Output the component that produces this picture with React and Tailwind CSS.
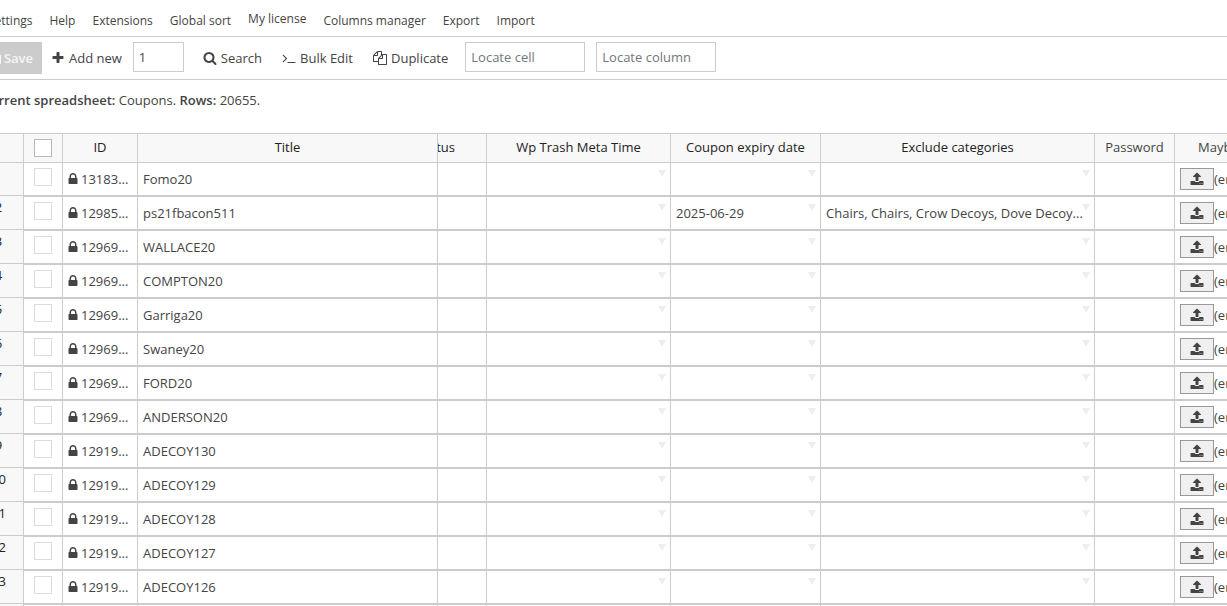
import React from 'react';

const ICONS = {
  save: 'M512 1536h768v-384h-768v384zm896 0h128v-896q0-14-10-38.5t-20-34.5l-281-281q-10-10-34-20t-39-10v416q0 40-28 68t-68 28h-576q-40 0-68-28t-28-68v-416h-128v1280h128v-416q0-40 28-68t68-28h832q40 0 68 28t28 68v416zm-384-928v-320q0-13-9.5-22.5t-22.5-9.5h-192q-13 0-22.5 9.5t-9.5 22.5v320q0 13 9.5 22.5t22.5 9.5h192q13 0 22.5-9.5t9.5-22.5zm640 32v928q0 40-28 68t-68 28h-1344q-40 0-68-28t-28-68v-1344q0-40 28-68t68-28h928q40 0 88 20t76 48l280 280q28 28 48 76t20 88z',
  plus: 'M1600 736v192q0 40-28 68t-68 28h-416v416q0 40-28 68t-68 28h-192q-40 0-68-28t-28-68v-416h-416q-40 0-68-28t-28-68v-192q0-40 28-68t68-28h416v-416q0-40 28-68t68-28h192q40 0 68 28t28 68v416h416q40 0 68 28t28 68z',
  search: 'M1216 832q0-185-131.5-316.5t-316.5-131.5-316.5 131.5-131.5 316.5 131.5 316.5 316.5 131.5 316.5-131.5 131.5-316.5zm512 832q0 52-38 90t-90 38q-54 0-90-38l-343-342q-179 124-399 124-143 0-273.5-55.5t-225-150-150-225-55.5-273.5 55.5-273.5 150-225 225-150 273.5-55.5 273.5 55.5 225 150 150 225 55.5 273.5q0 220-124 399l343 343q37 37 37 90z',
  terminal: 'M649 983l-466 466q-10 10-23 10t-23-10l-50-50q-10-10-10-23t10-23l393-393-393-393q-10-10-10-23t10-23l50-50q10-10 23-10t23 10l466 466q10 10 10 23t-10 23zm1079 457v64q0 14-9 23t-23 9h-960q-14 0-23-9t-9-23v-64q0-14 9-23t23-9h960q14 0 23 9t9 23z',
  copy: 'M1696 384q40 0 68 28t28 68v1216q0 40-28 68t-68 28h-960q-40 0-68-28t-28-68v-288h-544q-40 0-68-28t-28-68v-672q0-40 20-88t48-76l408-408q28-28 76-48t88-20h416q40 0 68 28t28 68v328q68-40 128-40h416zm-544 213l-299 299h299v-299zm-640-384l-299 299h299v-299zm196 647l316-316v-416h-384v416q0 40-28 68t-68 28h-416v640h512v-256q0-40 20-88t48-76zm956 804v-1152h-384v416q0 40-28 68t-68 28h-416v640h896z',
  lock: 'M640 768h512v-192q0-106-75-181t-181-75-181 75-75 181v192zm832 96v576q0 40-28 68t-68 28h-960q-40 0-68-28t-28-68v-576q0-40 28-68t68-28h32v-192q0-184 132-316t316-132 316 132 132 316v192h32q40 0 68 28t28 68z',
  upload: 'M1344 1472q0-26-19-45t-45-19-45 19-19 45 19 45 45 19 45-19 19-45zm256 0q0-26-19-45t-45-19-45 19-19 45 19 45 45 19 45-19 19-45zm128-224v320q0 40-28 68t-68 28h-1472q-40 0-68-28t-28-68v-320q0-40 28-68t68-28h427q21 56 70.5 92t110.5 36h256q61 0 110.5-36t70.5-92h427q40 0 68 28t28 68zm-325-648q-17 40-59 40h-256v448q0 26-19 45t-45 19h-256q-26 0-45-19t-19-45v-448h-256q-42 0-59-40-17-39 14-69l448-448q18-19 45-19t45 19l448 448q31 30 14 69z',
};

const MENU = ['Settings', 'Help', 'Extensions', 'Global sort', 'My license', 'Columns manager', 'Export', 'Import'];

const ROWS = [
  { id: '13183...', title: 'Fomo20' },
  { id: '12985...', title: 'ps21fbacon511', expiry: '2025-06-29', exclude: 'Chairs, Chairs, Crow Decoys, Dove Decoy...' },
  { id: '12969...', title: 'WALLACE20' },
  { id: '12969...', title: 'COMPTON20' },
  { id: '12969...', title: 'Garriga20' },
  { id: '12969...', title: 'Swaney20' },
  { id: '12969...', title: 'FORD20' },
  { id: '12969...', title: 'ANDERSON20' },
  { id: '12919...', title: 'ADECOY130' },
  { id: '12919...', title: 'ADECOY129' },
  { id: '12919...', title: 'ADECOY128' },
  { id: '12919...', title: 'ADECOY127' },
  { id: '12919...', title: 'ADECOY126' },
];

const COLS = ['w-[50px]', 'w-[39px]', 'w-[75px]', 'w-[300px]', 'w-[49px]', 'w-[184px]', 'w-[150px]', 'w-[274px]', 'w-[80px]', 'w-[140px]'];

function Icon({ name, className = 'size-3.5' }) {
  return (
    <svg viewBox="0 0 1792 1792" fill="currentColor" className={`shrink-0 ${className}`} aria-hidden="true">
      <path d={ICONS[name]} />
    </svg>
  );
}

function ToolButton({ icon, children }) {
  return (
    <button type="button" className="flex items-center gap-1 whitespace-nowrap">
      <Icon name={icon} />
      {children}
    </button>
  );
}

function Head({ children, className = '' }) {
  return (
    <th className={`h-[30px] overflow-hidden whitespace-nowrap border-y border-r border-[#ccc] bg-[#f8f8f8] p-0 text-center font-normal text-[#222] ${className}`}>
      {children}
    </th>
  );
}

function Cell({ children, first, dropdown }) {
  return (
    <td className={`relative overflow-hidden border-b border-r border-[#ccc] px-[5px] py-0 align-top ${first ? '' : 'border-t'}`}>
      <div className="truncate leading-8">{children}</div>
      {dropdown && (
        <svg viewBox="0 0 8 7" className="absolute right-1 top-[7px] h-[7px] w-2 text-[#eee]" aria-hidden="true">
          <path d="M0 0h8L4 7z" fill="currentColor" />
        </svg>
      )}
    </td>
  );
}

function Row({ row, index }) {
  const first = index === 0;
  return (
    <tr className={first ? 'h-[33px]' : 'h-[34px]'}>
      <th className="border-b border-r border-[#ccc] bg-[#f8f8f8] p-0 text-center align-top font-normal leading-[22px] text-[#222]">
        {index + 1}
      </th>
      <td className={`border-b border-r border-[#ccc] px-2.5 pb-0 pt-[5px] align-top ${first ? '' : 'border-t'}`}>
        <input type="checkbox" aria-label={`Select ${row.title}`} className="block size-[18px] appearance-none border border-[#dcdcde] bg-white" />
      </td>
      <Cell first={first}>
        <span className="flex items-center gap-px">
          <Icon name="lock" className="-ml-0.5 size-3.5" />
          {row.id}
        </span>
      </Cell>
      <Cell first={first}>{row.title}</Cell>
      <Cell first={first} />
      <Cell first={first} dropdown />
      <Cell first={first} dropdown>{row.expiry}</Cell>
      <Cell first={first} dropdown>{row.exclude}</Cell>
      <Cell first={first} />
      <Cell first={first}>
        <span className="flex h-8 items-center">
          <button type="button" aria-label="Upload file" className="flex h-[22px] w-[34px] items-center justify-center border border-[#999] bg-[#f0f0f0]">
            <Icon name="upload" />
          </button>
          (empty)
        </span>
      </Cell>
    </tr>
  );
}

export default function App() {
  return (
    <div className="h-screen overflow-hidden bg-white font-['Open_Sans','Noto_Sans',sans-serif] text-[13px] leading-5 text-[#444]">
      <nav className="-ml-3 flex h-[37px] gap-[17px] border-b border-[#ccc] pt-[11px] text-xs leading-5">
        {MENU.map((item) => (
          <a key={item} href="#" className={item === 'My license' ? '-mt-0.5 whitespace-nowrap' : 'whitespace-nowrap'}>
            {item}
          </a>
        ))}
      </nav>

      <div className="-ml-5 flex h-[43px] items-start border-b border-[#ccc] pt-[5px]">
        <button type="button" className="mr-[9px] flex h-8 w-[62px] items-center justify-end gap-0.5 bg-[#ccc] pr-[9px] font-semibold text-[#f5f5f5]">
          <Icon name="save" />
          Save
        </button>
        <div className="flex h-8 items-center">
          <ToolButton icon="plus">Add new</ToolButton>
        </div>
        <input aria-label="Rows to add" defaultValue="1" className="ml-[11px] mr-[19px] h-[30px] w-[51px] border border-[#ccc] px-[5px]" />
        <div className="mr-[17px] flex h-8 items-center gap-5">
          <ToolButton icon="search">Search</ToolButton>
          <ToolButton icon="terminal">Bulk Edit</ToolButton>
          <ToolButton icon="copy">Duplicate</ToolButton>
        </div>
        <input aria-label="Locate cell" placeholder="Locate cell" className="mr-[11px] h-[30px] w-[120px] border border-[#ccc] px-[5px] placeholder:text-[#72777c]" />
        <input aria-label="Locate column" placeholder="Locate column" className="h-[30px] w-[120px] border border-[#ccc] px-[5px] placeholder:text-[#72777c]" />
      </div>

      <p className="-ml-[18px] h-[53px] pt-2.5">
        <b className="font-semibold">Current spreadsheet:</b> Coupons. <b className="font-semibold">Rows:</b> 20655.
      </p>

      <table className="-ml-[26px] w-[1341px] table-fixed border-separate border-spacing-0">
        <colgroup>
          {COLS.map((width) => <col key={width} className={width} />)}
        </colgroup>
        <thead>
          <tr>
            <Head />
            <Head>
              <input type="checkbox" aria-label="Select all" className="mx-auto block size-[18px] appearance-none border border-[#b4b9be] bg-white" />
            </Head>
            <Head className="pb-0.5">ID</Head>
            <Head className="pb-0.5">Title</Head>
            <Head className="pb-0.5">
              <span className="flex justify-end pr-[31px]">Status</span>
            </Head>
            <Head className="pb-0.5">Wp Trash Meta Time</Head>
            <Head className="pb-0.5">Coupon expiry date</Head>
            <Head className="pb-0.5">Exclude categories</Head>
            <Head className="pb-0.5 text-[#444]">Password</Head>
            <Head className="pb-0.5 text-[#444]">
              <span className="block pl-[23px] text-left">Maybe unserialize</span>
            </Head>
          </tr>
        </thead>
        <tbody>
          {ROWS.map((row, index) => <Row key={row.title} row={row} index={index} />)}
          {/* start of the next page of rows */}
          <tr className="h-[34px]">
            <th className="border-r border-[#ccc] bg-[#f8f8f8]" />
            {COLS.slice(1).map((width) => <td key={width} className="border-r border-t border-[#ccc]" />)}
          </tr>
        </tbody>
      </table>
    </div>
  );
}
